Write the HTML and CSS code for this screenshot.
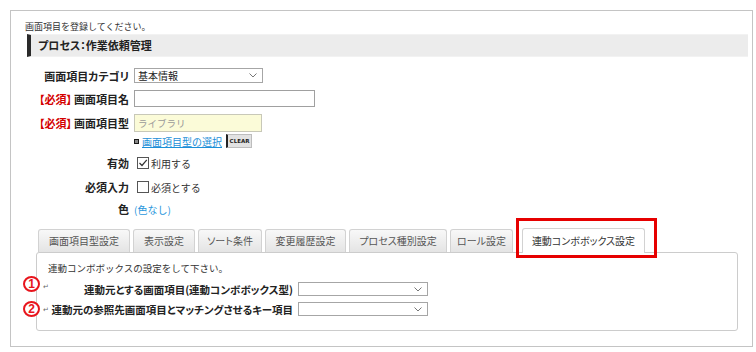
FILE: index.html
```html
<!DOCTYPE html>
<html lang="ja">
<head>
  <meta charset="UTF-8">
  <title>画面項目登録</title>
  <link rel="stylesheet" href="styles.css">
</head>
<body>

  <div class="frame">
    <p class="intro">画面項目を登録してください。</p>
    <div class="titleBar">プロセス：作業依頼管理</div>

    <div class="form">
      <div class="row r1">
        <span class="label">画面項目カテゴリ</span>
        <div class="select wCat"><span>基本情報</span><svg width="8" height="5" viewBox="0 0 8 5"><path d="M0.5 0.5 L4 4 L7.5 0.5" fill="none" stroke="#777" stroke-width="1"/></svg></div>
      </div>
      <div class="row r2">
        <span class="label"><em>【必須】</em>画面項目名</span>
        <div class="input wName"></div>
      </div>
      <div class="row r3">
        <span class="label"><em>【必須】</em>画面項目型</span>
        <div class="input wType readonly"><span class="ph">ライブラリ</span></div>
      </div>
      <div class="row r4">
        <span class="label"></span>
        <div class="linkLine">
          <span class="bullet"></span>
          <a href="#" class="link">画面項目型の選択</a>
          <span class="clearBtn">CLEAR</span>
        </div>
      </div>
      <div class="row r5">
        <span class="label">有効</span>
        <label class="check"><span class="box"><svg width="10" height="10" viewBox="0 0 10 10"><path d="M1.5 5 L4 7.5 L8.8 1.8" fill="none" stroke="#333" stroke-width="1.2"/></svg></span>利用する</label>
      </div>
      <div class="row r6">
        <span class="label">必須入力</span>
        <label class="check"><span class="box"></span>必須とする</label>
      </div>
      <div class="row r7">
        <span class="label">色</span>
        <a href="#" class="link plain">(色なし)</a>
      </div>
    </div>

    <div class="tabs">
      <span class="tab t1">画面項目型設定</span>
      <span class="tab t2">表示設定</span>
      <span class="tab t3">ソート条件</span>
      <span class="tab t4">変更履歴設定</span>
      <span class="tab t5">プロセス種別設定</span>
      <span class="tab t6">ロール設定</span>
      <span class="tab active">連動コンボボックス設定<span class="redMark"></span></span>
    </div>

    <div class="panel">
      <p class="panelIntro">連動コンボボックスの設定をして下さい。</p>
      <div class="prow p1">
        <span class="num">1</span>
        <span class="ret">↵</span>
        <span class="plabel">連動元とする画面項目(連動コンボボックス型)</span>
        <div class="select wCombo"><span></span><svg width="8" height="5" viewBox="0 0 8 5"><path d="M0.5 0.5 L4 4 L7.5 0.5" fill="none" stroke="#777" stroke-width="1"/></svg></div>
      </div>
      <div class="prow p2">
        <span class="num">2</span>
        <span class="ret">↵</span>
        <span class="plabel">連動元の参照先画面項目とマッチングさせるキー項目</span>
        <div class="select wCombo"><span></span><svg width="8" height="5" viewBox="0 0 8 5"><path d="M0.5 0.5 L4 4 L7.5 0.5" fill="none" stroke="#777" stroke-width="1"/></svg></div>
      </div>
    </div>
  </div>

</body>
</html>
```

FILE: styles.css
```css
body {
  margin: 0;
  padding: 0;
  background: #fff;
  font-family: "Noto Sans CJK JP", "Noto Sans", sans-serif;
  font-size: 9.5px;
  color: #222;
}
p {
  margin: 0;
}
.frame {
  margin: 10px 0 0 10px;
  width: 743px;
  height: 337px;
  box-sizing: border-box;
  border: 1px solid #c4c4c4;
  padding-top: 9px;
}
.intro {
  padding-left: 14px;
  line-height: 14px;
  font-size: 9px;
  color: #333;
}
.titleBar {
  margin: 0 4px 0 16px;
  height: 23px;
  box-sizing: border-box;
  background: #ececec;
  border-left: 4px solid #2a2a2a;
  border-top: 1px solid #f2f2f2;
  border-bottom: 1px solid #f2f2f2;
  padding-left: 7px;
  font-size: 11px;
  font-weight: bold;
  font-feature-settings: "palt";
  line-height: 21px;
  color: #222;
}
.form {
  margin: 8px 0 0 16px;
}
.row {
  display: flex;
  align-items: center;
  gap: 5px;
}
.r1 { height: 21px; }
.r2 { height: 25px; }
.r3 { height: 23px; }
.r4 { height: 14px; }
.r5 { height: 30px; }
.r6 { height: 18px; }
.r7 { height: 26px; }
.label {
  width: 102px;
  flex: none;
  text-align: right;
  font-size: 11px;
  font-weight: bold;
  font-feature-settings: "palt";
  white-space: nowrap;
  color: #222;
}
.label em {
  font-style: normal;
  color: #d40000;
  margin-right: 2px;
}
.select {
  display: flex;
  align-items: center;
  justify-content: space-between;
  box-sizing: border-box;
  border: 1px solid #a6a6a6;
  background: #fff;
  padding: 0 5px 0 3px;
  font-size: 10px;
}
.wCat {
  width: 129px;
  height: 15px;
}
.input {
  box-sizing: border-box;
  border: 1px solid #a0a0a0;
  background: #fff;
}
.wName {
  width: 181px;
  height: 17px;
}
.wType {
  width: 128px;
  height: 18px;
  display: flex;
  align-items: center;
  padding-left: 3px;
}
.readonly {
  background: #fbfbd8;
  border-color: #c8c8b8;
}
.ph {
  color: #999;
  font-size: 9.5px;
}
.linkLine {
  display: flex;
  align-items: center;
  height: 14px;
}
.bullet {
  width: 5px;
  height: 5px;
  box-sizing: border-box;
  border: 1.5px solid #1a1a1a;
  background: #888;
  margin-right: 3px;
}
.link {
  color: #1b8fd8;
  font-size: 10px;
  text-decoration: underline;
}
.link.plain {
  text-decoration: none;
  color: #2a96dc;
}
.clearBtn {
  margin-left: 4px;
  width: 26px;
  height: 14px;
  box-sizing: border-box;
  border: 1px solid #bdbdbd;
  border-left: 2px solid #222;
  background: #e2e2e2;
  font-family: "DejaVu Sans", sans-serif;
  font-size: 5.5px;
  font-weight: bold;
  line-height: 12px;
  text-align: center;
  color: #222;
}
.check {
  display: flex;
  align-items: center;
  margin-left: 3px;
  font-size: 10px;
  color: #333;
}
.box {
  width: 12px;
  height: 12px;
  box-sizing: border-box;
  border: 1px solid #555;
  background: #fff;
  margin-right: 2px;
  display: flex;
  align-items: center;
  justify-content: center;
}
.tabs {
  position: relative;
  z-index: 1;
  display: flex;
  align-items: flex-end;
  gap: 3px;
  height: 23px;
  margin: 7px 0 0 27px;
}
.tab {
  height: 23px;
  box-sizing: border-box;
  border: 1px solid #d2d2d2;
  border-bottom: none;
  border-radius: 3px 3px 0 0;
  background: linear-gradient(#f8f8f8, #e4e4e4);
  font-size: 10px;
  font-feature-settings: "palt";
  line-height: 22px;
  text-align: center;
  color: #555;
  white-space: nowrap;
}
.t1 { width: 92px; }
.t2 { width: 62px; }
.t3 { width: 64px; }
.t4 { width: 81px; }
.t5 { width: 98px; }
.t6 { width: 63px; }
.tab.active {
  position: relative;
  width: 123px;
  height: 25px;
  margin: 0 0 -1px 6px;
  background: #fff;
  color: #333;
  line-height: 24px;
}
.redMark {
  position: absolute;
  left: -7px;
  top: -11px;
  right: -13px;
  bottom: -5px;
  border: 3px solid #e60000;
}
.panel {
  margin-left: 25px;
  width: 702px;
  box-sizing: border-box;
  border: 1px solid #cccccc;
  border-radius: 3px;
  padding: 8px 0 11px 7px;
}
.panelIntro {
  padding-left: 4px;
  line-height: 14px;
  font-size: 9.5px;
  color: #333;
}
.prow {
  position: relative;
  display: flex;
  align-items: center;
  height: 20px;
}
.p1 {
  margin-top: 4px;
}
.ret {
  width: 4px;
  font-size: 7px;
  color: #666;
  line-height: 8px;
  margin-left: -1px;
  margin-right: 1px;
}
.p1 .ret {
  align-self: flex-start;
  margin-top: 3px;
}
.plabel {
  width: 245px;
  text-align: right;
  font-size: 10.5px;
  font-weight: bold;
  font-feature-settings: "palt";
  white-space: nowrap;
  margin-right: 5px;
  color: #222;
}
.wCombo {
  width: 130px;
  height: 14px;
}
.num {
  position: absolute;
  left: -21px;
  width: 17px;
  height: 16px;
  box-sizing: border-box;
  border: 2px solid #e8141c;
  border-radius: 50%;
  background: #fff;
  color: #e8141c;
  font-family: "Liberation Sans", sans-serif;
  font-size: 12px;
  font-weight: bold;
  line-height: 12px;
  text-align: center;
}
.p1 .num { top: -3px; }
.p2 .num { top: 2px; }
```
